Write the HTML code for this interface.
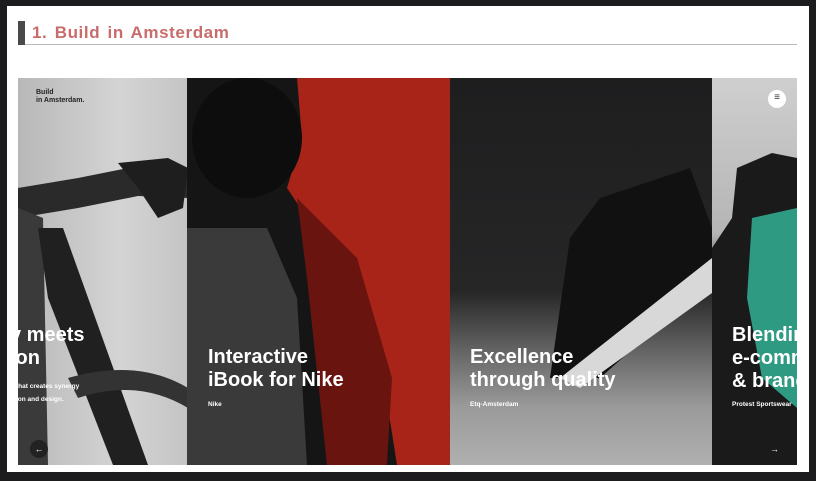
<!DOCTYPE html>
<html><head><meta charset="utf-8"><style>
*{margin:0;padding:0;box-sizing:border-box}
body{width:816px;height:481px;background:#1c1c1e;position:relative;overflow:hidden;font-family:"Liberation Sans",sans-serif}
.card{position:absolute;left:7px;top:6px;width:802px;height:466px;background:#fff}
.bar{position:absolute;left:18px;top:21px;width:7px;height:24px;background:#4a4a4a}
.title{position:absolute;left:32px;top:23px;font-size:17px;font-weight:bold;color:#c96b6b;letter-spacing:0.6px;word-spacing:2px}
.line{position:absolute;left:25px;top:44px;width:772px;height:1px;background:#bbb}
.p{position:absolute;top:78px;height:387px;overflow:hidden}
.h{position:absolute;color:#fff;font-weight:bold;font-size:20px;line-height:23px}
.s{position:absolute;color:#fff;font-size:7px;font-weight:bold}
</style></head><body>
<div class="card"></div>
<div class="bar"></div>
<div class="title">1. Build in Amsterdam</div>
<div class="line"></div>

<div class="p" style="left:18px;width:170px;background:linear-gradient(90deg,#b8b8b8,#d4d4d4 60%,#c4c4c4)">
 <svg width="170" height="387" style="position:absolute;left:0;top:0">
  <path d="M0 110 L60 100 L120 88 L170 95 L170 120 L120 118 L60 130 L0 140Z" fill="#2a2a2a"/>
  <path d="M100 85 L150 80 L170 90 L165 130 L140 140 L120 110Z" fill="#1e1e1e"/>
  <path d="M0 130 L25 140 L30 387 L0 387Z" fill="#3a3a3a"/>
  <path d="M20 150 L45 150 L130 387 L95 387 L30 220Z" fill="#202020"/>
  <path d="M50 300 Q120 280 170 310 L170 330 Q120 300 60 320Z" fill="#333"/>
 </svg>
 <div class="s" style="left:18px;top:11px;font-size:7px;color:#222;line-height:8px">Build<br>in Amsterdam.</div>
 <div class="h" style="left:-8px;top:246px">y meets<br>ion</div>
 <div class="s" style="left:-2px;top:302px;line-height:13px;font-size:6.5px">that creates synergy<br>ion and design.</div>
 <div style="position:absolute;left:12px;top:362px;width:18px;height:18px;border-radius:50%;background:#222;color:#fff;font-size:9px;text-align:center;line-height:18px">←</div>
</div>

<div class="p" style="left:187px;width:263px;background:#a82418">
 <svg width="263" height="387" style="position:absolute;left:0;top:0">
  <path d="M0 0 L110 0 L115 60 L100 110 L120 140 L160 180 L190 260 L210 387 L0 387Z" fill="#151515"/>
  <ellipse cx="60" cy="60" rx="55" ry="60" fill="#0d0d0d"/>
  <path d="M0 150 L80 150 L110 220 L120 387 L0 387Z" fill="#3a3a3a"/>
  <path d="M110 120 L170 180 L205 300 L200 387 L140 387 L120 200Z" fill="#6a1410"/>
 </svg>
 <div class="h" style="left:21px;top:268px">Interactive<br>iBook for Nike</div>
 <div class="s" style="left:21px;top:323px;font-size:6.5px">Nike</div>
</div>

<div class="p" style="left:450px;width:262px;background:linear-gradient(180deg,#1e1e1f 0%,#262627 55%,#6a6a6a 72%,#9a9a9a 85%,#b0b0b0 100%)">
 <svg width="262" height="387" style="position:absolute;left:0;top:0">
  <path d="M100 300 L120 160 L150 120 L240 90 L262 150 L262 200 L150 300Z" fill="#111"/>
  <path d="M110 300 L262 180 L262 215 L130 310Z" fill="#d8d8d8"/>
 </svg>
 <div class="h" style="left:20px;top:268px">Excellence<br>through quality</div>
 <div class="s" style="left:20px;top:323px;font-size:6.5px">Etq-Amsterdam</div>
</div>

<div class="p" style="left:712px;width:85px;background:linear-gradient(180deg,#cfcfcf,#b5b5b5 40%,#222 60%,#111)">
 <svg width="85" height="387" style="position:absolute;left:0;top:0">
  <path d="M25 90 L60 75 L85 80 L85 387 L0 387 L0 170 L20 140Z" fill="#1a1a1a"/>
  <path d="M40 140 L85 130 L85 330 L50 300 L35 220Z" fill="#2e9a82"/>
 </svg>
 <div style="position:absolute;left:56px;top:12px;width:18px;height:18px;border-radius:50%;background:#fff;text-align:center;line-height:16px;font-size:10px;color:#333">≡</div>
 <div class="h" style="left:20px;top:246px;white-space:nowrap">Blending<br>e-commerce<br>&amp; brand</div>
 <div class="s" style="left:20px;top:323px;font-size:6.5px;white-space:nowrap">Protest Sportswear</div>
 <div style="position:absolute;left:58px;top:366px;color:#fff;font-size:9px">→</div>
</div>
</body></html>
